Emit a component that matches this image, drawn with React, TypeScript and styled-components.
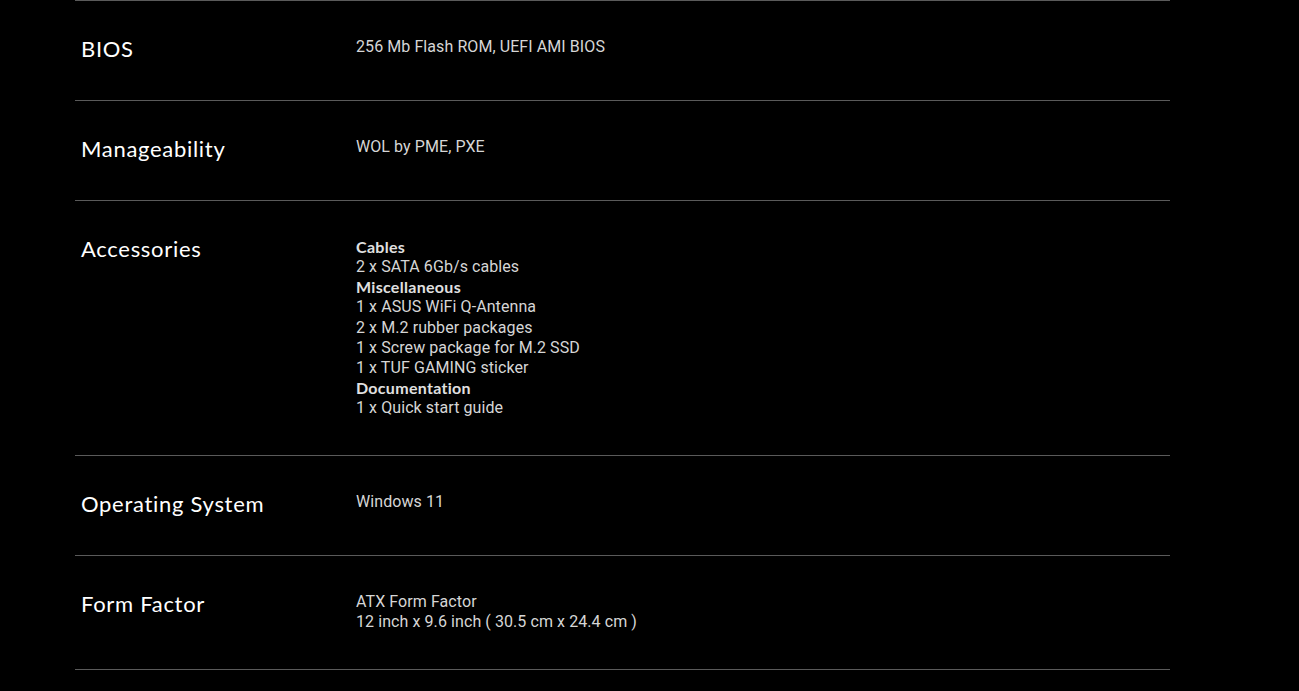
import styled, { createGlobalStyle } from "styled-components";

type Spec = {
    label: string;
    lines: { text: string; heading?: boolean }[];
};

const specs: Spec[] = [
    { label: "BIOS", lines: [{ text: "256 Mb Flash ROM, UEFI AMI BIOS" }] },
    { label: "Manageability", lines: [{ text: "WOL by PME, PXE" }] },
    {
        label: "Accessories",
        lines: [
            { text: "Cables", heading: true },
            { text: "2 x SATA 6Gb/s cables" },
            { text: "Miscellaneous", heading: true },
            { text: "1 x ASUS WiFi Q-Antenna" },
            { text: "2 x M.2 rubber packages" },
            { text: "1 x Screw package for M.2 SSD" },
            { text: "1 x TUF GAMING sticker" },
            { text: "Documentation", heading: true },
            { text: "1 x Quick start guide" },
        ],
    },
    { label: "Operating System", lines: [{ text: "Windows 11" }] },
    {
        label: "Form Factor",
        lines: [
            { text: "ATX Form Factor" },
            { text: "12 inch x 9.6 inch ( 30.5 cm x 24.4 cm )" },
        ],
    },
];

function App() {
    return (
        <>
            <GlobalStyle />
            <Page>
                <SpecTable>
                    {specs.map((spec) => (
                        <Row key={spec.label}>
                            <Label>{spec.label}</Label>
                            <Value>
                                {spec.lines.map((line, i) => (
                                    <Line key={i} $heading={line.heading}>
                                        {line.text}
                                    </Line>
                                ))}
                            </Value>
                        </Row>
                    ))}
                </SpecTable>
            </Page>
        </>
    );
}

const GlobalStyle = createGlobalStyle`
    html, body {
        margin: 0;
        padding: 0;
        background: #000;
    }
`;

const Page = styled.div`
    background: #000;
    min-height: 691px;
    padding-left: 75px;
`;

const SpecTable = styled.div`
    width: 1095px;
    border-bottom: 1px solid #5a5a5a;
`;

const Row = styled.div`
    display: flex;
    border-top: 1px solid #5a5a5a;
    padding: 36px 0 36.6px;
`;

const Label = styled.div`
    width: 275px;
    padding-left: 6px;
    font-family: Lato, "Noto Sans", sans-serif;
    font-size: 22px;
    letter-spacing: 0.7px;
    line-height: 26.4px;
    color: #fff;
    margin-top: -1px;
    margin-bottom: 1px;
`;

const Value = styled.div`
    display: flex;
    flex-direction: column;
`;

const Line = styled.div<{ $heading?: boolean }>`
    font-family: ${(p) => (p.$heading ? 'Lato, "Noto Sans", sans-serif' : 'Roboto, "Liberation Sans", sans-serif')};
    font-size: 16px;
    line-height: 20.14px;
    font-weight: ${(p) => (p.$heading ? 700 : 400)};
    letter-spacing: ${(p) => (p.$heading ? "0.3px" : "0.08px")};
    color: ${(p) => (p.$heading ? "#e0e0e0" : "#d6d6d6")};
`;

export default App;
